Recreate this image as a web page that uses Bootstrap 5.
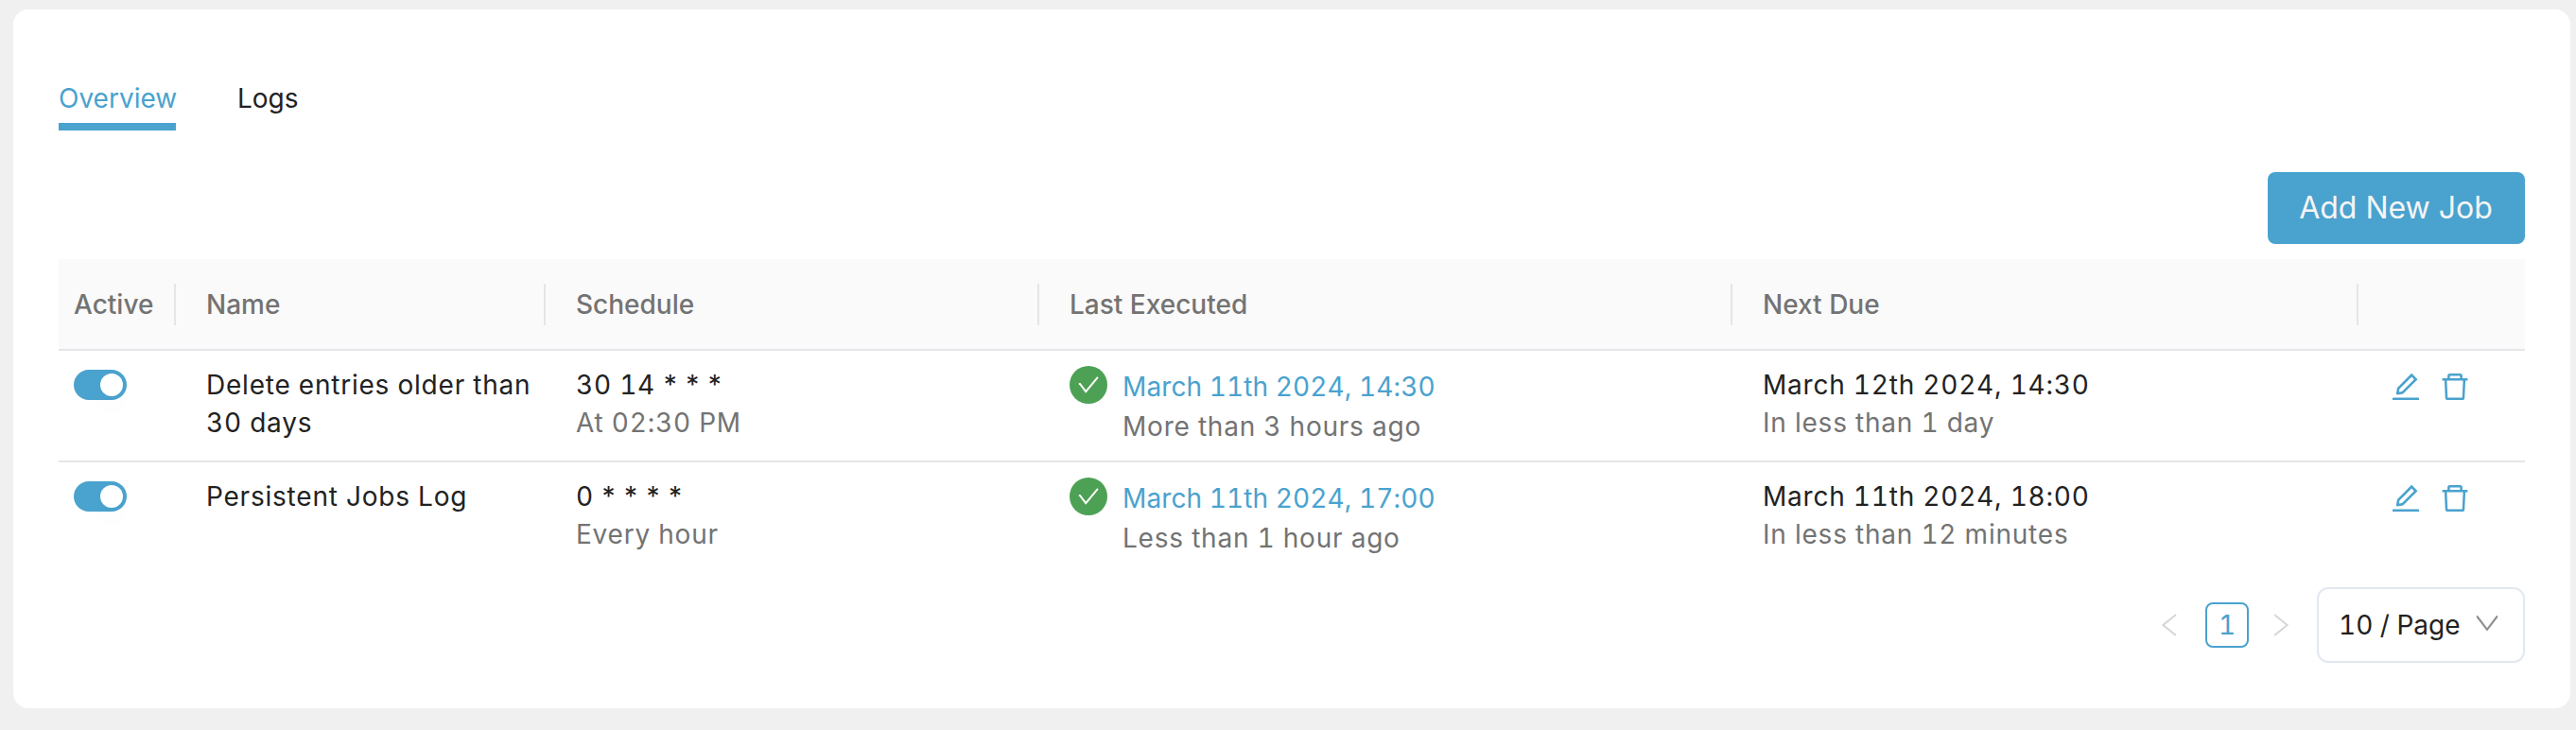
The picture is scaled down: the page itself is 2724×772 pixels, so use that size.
<!DOCTYPE html>
<html lang="en">
<head>
<meta charset="utf-8">
<meta name="viewport" content="width=device-width, initial-scale=1">
<title>Scheduled Jobs</title>
<link href="https://cdn.jsdelivr.net/npm/bootstrap@5.3.0/dist/css/bootstrap.min.css" rel="stylesheet">
<style>
  :root { --brand: #4aa2ce; --ink: #222; --soft: #737373; --rule: #e5e5ea; }
  body { background: #f0f0f0; color: var(--ink); font: 400 28px/40px Inter, "Liberation Sans", sans-serif; font-variant-numeric: tabular-nums; }
  .jobs-panel { margin: 10px 6px 0 14px; padding: 74px 48px 0; height: 739px; border: 0; border-radius: 16px; }
  .job-tabs { gap: 65px; }
  .job-tabs .nav-link { padding: 0 0 6px; border-bottom: 8px solid transparent; color: var(--ink); line-height: 40px; white-space: nowrap; }
  .job-tabs .nav-link.active { width: 124px; color: var(--brand); border-color: var(--brand); }
  .btn-add { --bs-btn-color: #f5f5f5; --bs-btn-bg: var(--brand); --bs-btn-hover-bg: #3b93bf; --bs-btn-hover-color: #fff; width: 272px; height: 76px; margin: 44px 0 16px; padding: 0 1px 0 0; border: 0; border-radius: 8px; font-size: 32px; line-height: 74px; }
  .job-table { table-layout: fixed; width: 2608px; --bs-table-bg: transparent; border-color: var(--rule); color: var(--ink); }
  .job-table th { padding: 26px 0 25px; background: #fafafa; border-bottom: 2px solid var(--rule); font-weight: 500; color: var(--soft); }
  .job-table th > div { height: 44px; line-height: 44px; padding-left: 32px; border-right: 2px solid var(--rule); }
  .job-table th:first-child > div, .job-table td:first-child { padding-left: 16px; }
  .job-table th:last-child > div { border: 0; }
  .job-table td { height: 118px; padding: 16px 0 0 32px; border-bottom: 2px solid var(--rule); letter-spacing: .78px; color: var(--ink); }
  .job-table tr:last-child td { height: 116px; border: 0; }
  .job-table .note { color: var(--soft); }
  .stars { font-variant-numeric: normal; }
  .job-switch { width: 56px; height: 32px; margin: 4px 0 0; padding: 4px; border-radius: 16px; background: var(--brand); }
  .knob { width: 24px; height: 24px; border-radius: 50%; background: #fff; box-shadow: 0 16px 20px rgba(0, 0, 0, .015); }
  .ran { line-height: 42px; padding-top: 1px; }
  .ran a { color: var(--brand); letter-spacing: .1px; text-decoration: none; }
  .icon-tool { color: var(--brand); display: block; width: 36px; height: 36px; }
  .pager { margin-top: 17px; height: 80px; }
  .page-now { width: 46px; height: 48px; margin: 0 27px 0 30px; border: 2px solid var(--brand); border-radius: 8px; color: var(--brand); line-height: 44px; }
  .page-size { width: 220px; height: 80px; margin-left: 29px; padding: 0 26px 0 21px; border: 2px solid #e2e8f0; border-radius: 12px; }
</style>
</head>
<body>
<svg class="d-none" aria-hidden="true">
  <symbol id="edit" viewBox="0 0 1024 1024"><path d="M257.7 752c2 0 4-.2 6-.5L431.9 722c2-.4 3.9-1.3 5.3-2.8l423.9-423.9a9.96 9.96 0 000-14.1L694.9 114.9c-1.9-1.9-4.4-2.9-7.1-2.9s-5.2 1-7.1 2.9L256.8 538.8c-1.5 1.5-2.4 3.3-2.8 5.3l-29.5 168.2a33.5 33.5 0 009.4 29.8c6.6 6.4 14.9 9.9 23.8 9.9zm67.4-174.4L687.8 215l73.3 73.3-362.7 362.6-88.9 15.7 15.6-89zM880 836H144c-17.7 0-32 14.3-32 32v36c0 4.4 3.6 8 8 8h784c4.4 0 8-3.6 8-8v-36c0-17.7-14.3-32-32-32z"/></symbol>
  <symbol id="bin" viewBox="0 0 1024 1024"><path d="M360 184h-8c4.4 0 8-3.6 8-8v8h304v-8c0 4.4 3.6 8 8 8h-8v72h72v-80c0-35.3-28.7-64-64-64H352c-35.3 0-64 28.7-64 64v80h72v-72zm504 72H160c-17.7 0-32 14.3-32 32v32c0 4.4 3.6 8 8 8h60.4l24.7 523c1.6 34.1 29.8 61 63.9 61h454c34.2 0 62.3-26.8 63.9-61l24.7-523H888c4.4 0 8-3.6 8-8v-32c0-17.7-14.3-32-32-32zM731.3 840H292.7l-24.2-512h487l-24.2 512z"/></symbol>
  <symbol id="done" viewBox="0 0 40 40"><circle cx="20" cy="20" r="20" fill="#4da155"/><path d="M9.8 18.9H11L17.2 27.2 29.9 11.8" fill="none" stroke="#fff" stroke-width="2"/></symbol>
</svg>

<main class="card jobs-panel">
  <nav class="nav job-tabs">
    <a class="nav-link active" href="#">Overview</a>
    <a class="nav-link" href="#">Logs</a>
  </nav>
  <div class="d-flex justify-content-end">
    <button type="button" class="btn btn-add">Add New Job</button>
  </div>

  <table class="table job-table align-top mb-0">
    <colgroup><col style="width:124px"><col style="width:391px"><col style="width:522px"><col style="width:733px"><col style="width:662px"><col style="width:176px"></colgroup>
    <thead>
      <tr><th><div>Active</div></th><th><div>Name</div></th><th><div>Schedule</div></th><th><div>Last Executed</div></th><th><div>Next Due</div></th><th><div></div></th></tr>
    </thead>
    <tbody>
      <tr>
        <td><div class="job-switch d-flex justify-content-end" role="switch" aria-checked="true"><span class="knob"></span></div></td>
        <td>Delete entries older than<br>30 days</td>
        <td>30 14<span class="stars"> * * *</span><div class="note">At 02:30 PM</div></td>
        <td><div class="d-flex gap-3"><svg width="40" height="40"><use href="#done"/></svg><div class="ran"><a href="#">March 11th 2024, 14:30</a><div class="note">More than 3 hours ago</div></div></div></td>
        <td>March 12th 2024, 14:30<div class="note">In less than 1 day</div></td>
        <td><div class="d-flex gap-3 pt-1"><svg class="icon-tool" fill="currentColor"><use href="#edit"/></svg><svg class="icon-tool" fill="currentColor"><use href="#bin"/></svg></div></td>
      </tr>
      <tr>
        <td><div class="job-switch d-flex justify-content-end" role="switch" aria-checked="true"><span class="knob"></span></div></td>
        <td>Persistent Jobs Log</td>
        <td>0<span class="stars"> * * * *</span><div class="note">Every hour</div></td>
        <td><div class="d-flex gap-3"><svg width="40" height="40"><use href="#done"/></svg><div class="ran"><a href="#">March 11th 2024, 17:00</a><div class="note">Less than 1 hour ago</div></div></div></td>
        <td>March 11th 2024, 18:00<div class="note">In less than 12 minutes</div></td>
        <td><div class="d-flex gap-3 pt-1"><svg class="icon-tool" fill="currentColor"><use href="#edit"/></svg><svg class="icon-tool" fill="currentColor"><use href="#bin"/></svg></div></td>
      </tr>
    </tbody>
  </table>

  <div class="pager d-flex justify-content-end align-items-center">
    <svg width="16" height="24" viewBox="0 0 16 24" fill="none" stroke="#d6d6d6" stroke-width="2"><path d="M15 1 1.4 12 15 23"/></svg>
    <span class="page-now text-center">1</span>
    <svg width="16" height="24" viewBox="0 0 16 24" fill="none" stroke="#d6d6d6" stroke-width="2"><path d="M0 1 13.6 12 0 23"/></svg>
    <div class="page-size d-flex align-items-center justify-content-between"><span>10 / Page</span><svg width="24" height="17" viewBox="0 0 24 17" fill="none" stroke="#8f8f8f" stroke-width="2.2" class="mb-1"><path d="M.9 1H1.5L12 14.8 22.5 1H23.1"/></svg></div>
  </div>
</main>
<script src="https://cdn.jsdelivr.net/npm/bootstrap@5.3.0/dist/js/bootstrap.bundle.min.js"></script>
</body>
</html>
